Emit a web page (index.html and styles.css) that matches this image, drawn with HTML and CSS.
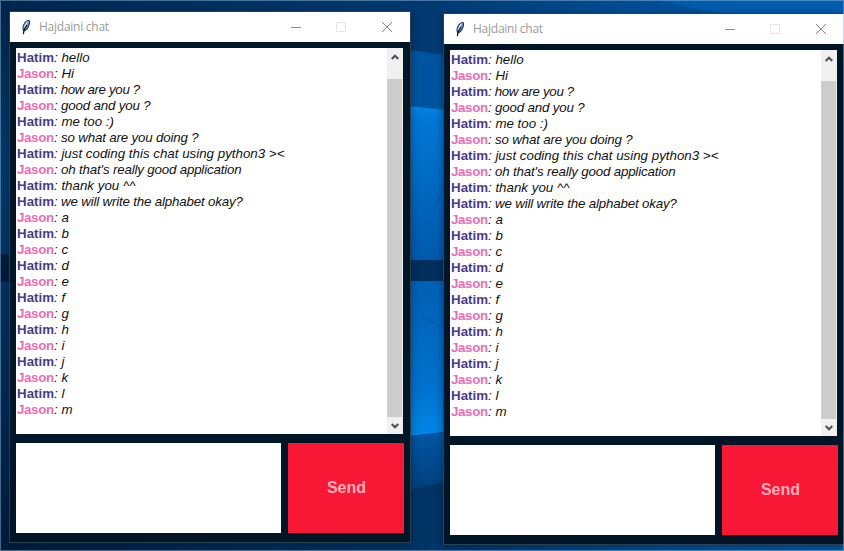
FILE: index.html
```html
<!DOCTYPE html>
<html lang="en">
<head>
<meta charset="utf-8">
<title>Hajdaini chat</title>
<link rel="stylesheet" href="styles.css">
</head>
<body>
<svg width="0" height="0" class="defs" aria-hidden="true">
  <symbol id="feather" viewBox="0 0 16 16">
    <path d="M5.500 12.500C3.800 10 4.200 6.500 6.500 3.500C8 1.500 10.200 .3 11.500 1.200C12.800 3 11.800 7 9.800 9.800C8.700 11.300 7.500 12.300 5.500 12.500Z" fill="#1a2b4c"/>
    <path d="M5.300 10.500C4.900 8 5.900 5.500 7.600 3.600C9 2.200 10.400 1.500 11 2.200C11.500 4.500 10 8 8.200 10.200Z" fill="#7596c4"/>
    <path d="M9.300 2.600L6.300 8.500" stroke="#dce9f7" stroke-width="1.100" fill="none"/>
    <path d="M9 6L6 11L5.400 15.200" stroke="#101420" stroke-width="1.200" fill="none"/>
  </symbol>
  <symbol id="min" viewBox="0 0 12 12"><path d="M2 6.500H12" stroke="#8c8c8c"/></symbol>
  <symbol id="max" viewBox="0 0 12 12"><path d="M1.500 1.500H10.500V10.500H1.500Z" fill="none" stroke="#e5e5e5"/></symbol>
  <symbol id="close" viewBox="0 0 12 12"><path d="M1 1L11 11M11 1L1 11" stroke="#848484" stroke-width="1"/></symbol>
  <symbol id="up" viewBox="0 0 8 6"><path d="M.7 5L4 1.700L7.300 5" fill="none" stroke="#505050" stroke-width="2.100"/></symbol>
  <symbol id="down" viewBox="0 0 8 6"><path d="M.7 1L4 4.300L7.300 1" fill="none" stroke="#505050" stroke-width="2.100"/></symbol>
</svg>
<main class="desktop">
  <svg class="wallpaper" viewBox="0 0 844 551" aria-hidden="true">
    <defs>
      <linearGradient id="base" x1="0" x2="1"><stop offset="0" stop-color="#00274f"/><stop offset=".5" stop-color="#003a70"/><stop offset=".75" stop-color="#004d95"/><stop offset="1" stop-color="#0058a8"/></linearGradient>
      <linearGradient id="pane1" x1="0" y1="0" x2="0" y2="1"><stop offset="0" stop-color="#0086e6"/><stop offset=".08" stop-color="#0078d6"/><stop offset=".6" stop-color="#0066be"/><stop offset="1" stop-color="#005aab"/></linearGradient>
      <linearGradient id="pane2" x1="0" y1="0" x2="0" y2="1"><stop offset="0" stop-color="#0060b4"/><stop offset=".7" stop-color="#0072cf"/><stop offset="1" stop-color="#0087e8"/></linearGradient>
      <linearGradient id="glow" x1="0" y1="0" x2="0" y2="1"><stop offset="0" stop-color="#0057a4"/><stop offset="1" stop-color="#00407c"/></linearGradient>
      <linearGradient id="edge" x1="0" y1="0" x2="0" y2="1"><stop offset="0" stop-color="#00264c"/><stop offset=".3" stop-color="#003a6e"/><stop offset=".7" stop-color="#002b56"/><stop offset="1" stop-color="#001c3c"/></linearGradient>
      <linearGradient id="floor" x1="0" x2="1"><stop offset="0" stop-color="#001c3c"/><stop offset=".5" stop-color="#003566"/><stop offset=".8" stop-color="#00509b"/><stop offset="1" stop-color="#0058a8"/></linearGradient>
    </defs>
    <rect width="844" height="551" fill="url(#base)"/>
    <rect width="10" height="551" fill="url(#edge)"/>
    <path d="M0 254H10V282H0Z" fill="#001c3b"/>
    <path d="M410 50L444 55V110L410 106Z" fill="#00549f"/>
    <path d="M410 106L444 110V261H410Z" fill="url(#pane1)"/>
    <path d="M410 260H444V281H410Z" fill="#002f5e"/>
    <path d="M410 281H444V432L410 436Z" fill="url(#pane2)"/>
    <path d="M410 436L444 432V482L410 490Z" fill="url(#glow)"/>
    <path d="M410 490L444 482V551H410Z" fill="#003465"/>
    <path d="M422 315Q432 324 444 327M444 187L434 209" fill="none" stroke="#005aa9" stroke-width="1.500"/>
    <path d="M0 544H844V551H0Z" fill="url(#floor)"/>
    <path d="M660 0Q690 9 730 14H844V0Z" fill="#005cae"/>
  </svg>

  <section class="window window-a">
    <header class="titlebar">
      <svg class="feather"><use href="#feather"/></svg>
      <h1 class="title">Hajdaini chat</h1>
      <div class="controls">
        <svg class="control"><use href="#min"/></svg>
        <svg class="control"><use href="#max"/></svg>
        <svg class="control"><use href="#close"/></svg>
      </div>
    </header>
    <div class="body">
      <div class="log">
        <ul class="messages">
          <li><b class="hatim">Hatim</b>: hello</li>
          <li><b class="jason">Jason</b>: Hi</li>
          <li class="tighter"><b class="hatim">Hatim</b>: how are you ?</li>
          <li class="tight"><b class="jason">Jason</b>: good and you ?</li>
          <li><b class="hatim">Hatim</b>: me too :)</li>
          <li class="tight"><b class="jason">Jason</b>: so what are you doing ?</li>
          <li><b class="hatim">Hatim</b>: just coding this chat using python3 &gt;&lt;</li>
          <li class="tight"><b class="jason">Jason</b>: oh that's really good application</li>
          <li><b class="hatim">Hatim</b>: thank you ^^</li>
          <li class="tight"><b class="hatim">Hatim</b>: we will write the alphabet okay?</li>
          <li><b class="jason">Jason</b>: a</li>
          <li><b class="hatim">Hatim</b>: b</li>
          <li><b class="jason">Jason</b>: c</li>
          <li><b class="hatim">Hatim</b>: d</li>
          <li><b class="jason">Jason</b>: e</li>
          <li><b class="hatim">Hatim</b>: f</li>
          <li><b class="jason">Jason</b>: g</li>
          <li><b class="hatim">Hatim</b>: h</li>
          <li><b class="jason">Jason</b>: i</li>
          <li><b class="hatim">Hatim</b>: j</li>
          <li><b class="jason">Jason</b>: k</li>
          <li><b class="hatim">Hatim</b>: l</li>
          <li><b class="jason">Jason</b>: m</li>
        </ul>
        <div class="scrollbar">
          <svg class="arrow arrow-up"><use href="#up"/></svg>
          <div class="thumb"></div>
          <svg class="arrow arrow-down"><use href="#down"/></svg>
        </div>
      </div>
      <div class="composer">
        <textarea class="entry" aria-label="Message"></textarea>
        <button class="send">Send</button>
      </div>
    </div>
  </section>

  <section class="window window-b">
    <header class="titlebar">
      <svg class="feather"><use href="#feather"/></svg>
      <h1 class="title">Hajdaini chat</h1>
      <div class="controls">
        <svg class="control"><use href="#min"/></svg>
        <svg class="control"><use href="#max"/></svg>
        <svg class="control"><use href="#close"/></svg>
      </div>
    </header>
    <div class="body">
      <div class="log">
        <ul class="messages">
          <li><b class="hatim">Hatim</b>: hello</li>
          <li><b class="jason">Jason</b>: Hi</li>
          <li class="tighter"><b class="hatim">Hatim</b>: how are you ?</li>
          <li class="tight"><b class="jason">Jason</b>: good and you ?</li>
          <li><b class="hatim">Hatim</b>: me too :)</li>
          <li class="tight"><b class="jason">Jason</b>: so what are you doing ?</li>
          <li><b class="hatim">Hatim</b>: just coding this chat using python3 &gt;&lt;</li>
          <li class="tight"><b class="jason">Jason</b>: oh that's really good application</li>
          <li><b class="hatim">Hatim</b>: thank you ^^</li>
          <li class="tight"><b class="hatim">Hatim</b>: we will write the alphabet okay?</li>
          <li><b class="jason">Jason</b>: a</li>
          <li><b class="hatim">Hatim</b>: b</li>
          <li><b class="jason">Jason</b>: c</li>
          <li><b class="hatim">Hatim</b>: d</li>
          <li><b class="jason">Jason</b>: e</li>
          <li><b class="hatim">Hatim</b>: f</li>
          <li><b class="jason">Jason</b>: g</li>
          <li><b class="hatim">Hatim</b>: h</li>
          <li><b class="jason">Jason</b>: i</li>
          <li><b class="hatim">Hatim</b>: j</li>
          <li><b class="jason">Jason</b>: k</li>
          <li><b class="hatim">Hatim</b>: l</li>
          <li><b class="jason">Jason</b>: m</li>
        </ul>
        <div class="scrollbar">
          <svg class="arrow arrow-up"><use href="#up"/></svg>
          <div class="thumb"></div>
          <svg class="arrow arrow-down"><use href="#down"/></svg>
        </div>
      </div>
      <div class="composer">
        <textarea class="entry" aria-label="Message"></textarea>
        <button class="send">Send</button>
      </div>
    </div>
  </section>
</main>
</body>
</html>
```
FILE: styles.css
```css
* {
  box-sizing: border-box;
}

body {
  margin: 0;
  font-family: "Liberation Sans", Arial, sans-serif;
}

.defs {
  position: absolute;
}

.desktop {
  position: relative;
  width: 844px;
  height: 551px;
  overflow: hidden;
  background: #00274f;
}

.desktop::after {
  content: "";
  position: absolute;
  inset: 0;
  border: 1px solid rgba(143, 178, 211, 0.5);
  pointer-events: none;
}

.wallpaper {
  display: block;
  width: 844px;
  height: 551px;
}

.window {
  position: absolute;
  width: 402px;
  height: 532px;
  border: 1px solid #29404f;
  background: #001626;
  box-shadow: 0 2px 8px rgba(0, 10, 30, 0.4);
}

.window-a {
  left: 9px;
  top: 11px;
}

.window-b {
  left: 443px;
  top: 13px;
}

.titlebar {
  display: flex;
  align-items: center;
  height: 30px;
  padding: 0 17px 0 8px;
  background: #fff;
}

.feather {
  width: 16px;
  height: 16px;
}

.title {
  margin: 0 0 0 5px;
  font: 400 12px/16px "Open Sans", sans-serif;
  letter-spacing: -0.25px;
  color: #999;
  white-space: nowrap;
}

.controls {
  display: flex;
  gap: 34px;
  margin-left: auto;
}

.control {
  width: 12px;
  height: 12px;
}

.body {
  padding: 6px 6px 0;
}

.log {
  display: flex;
  width: 387px;
  height: 386px;
  background: #fff;
}

.messages {
  flex: 1;
  margin: 0;
  padding: 2px 0 0 1px;
  list-style: none;
  font-size: 13.33px;
  line-height: 16px;
  font-style: italic;
  color: #111;
  white-space: nowrap;
}

.messages b {
  display: inline-block;
  width: 37px;
  font-style: normal;
  letter-spacing: 0;
}

.messages .jason {
  letter-spacing: -0.35px;
}

.tight {
  letter-spacing: -0.18px;
}

.tighter {
  letter-spacing: -0.35px;
}

.hatim {
  color: #483d8b;
}

.jason {
  color: #e770b2;
}

.scrollbar {
  display: flex;
  flex-direction: column;
  align-items: center;
  width: 16px;
  background: #f0f0f0;
}

.arrow {
  width: 8px;
  height: 6px;
}

.arrow-up {
  margin: 6px 0 19px;
}

.thumb {
  width: 15px;
  height: 338px;
  margin-right: 1px;
  background: #cdcdcd;
}

.arrow-down {
  margin-top: 6px;
}

.composer {
  display: flex;
  gap: 7px;
  margin-top: 9px;
}

.entry {
  width: 265px;
  height: 90px;
  border: 0;
  padding: 4px;
  background: #fff;
  resize: none;
}

.send {
  width: 116px;
  height: 90px;
  border: 0;
  padding: 0 0 0 1px;
  background: #f81835;
  color: #ffb0b8;
  font: 700 16px/18px "Liberation Sans", Arial, sans-serif;
}
```
